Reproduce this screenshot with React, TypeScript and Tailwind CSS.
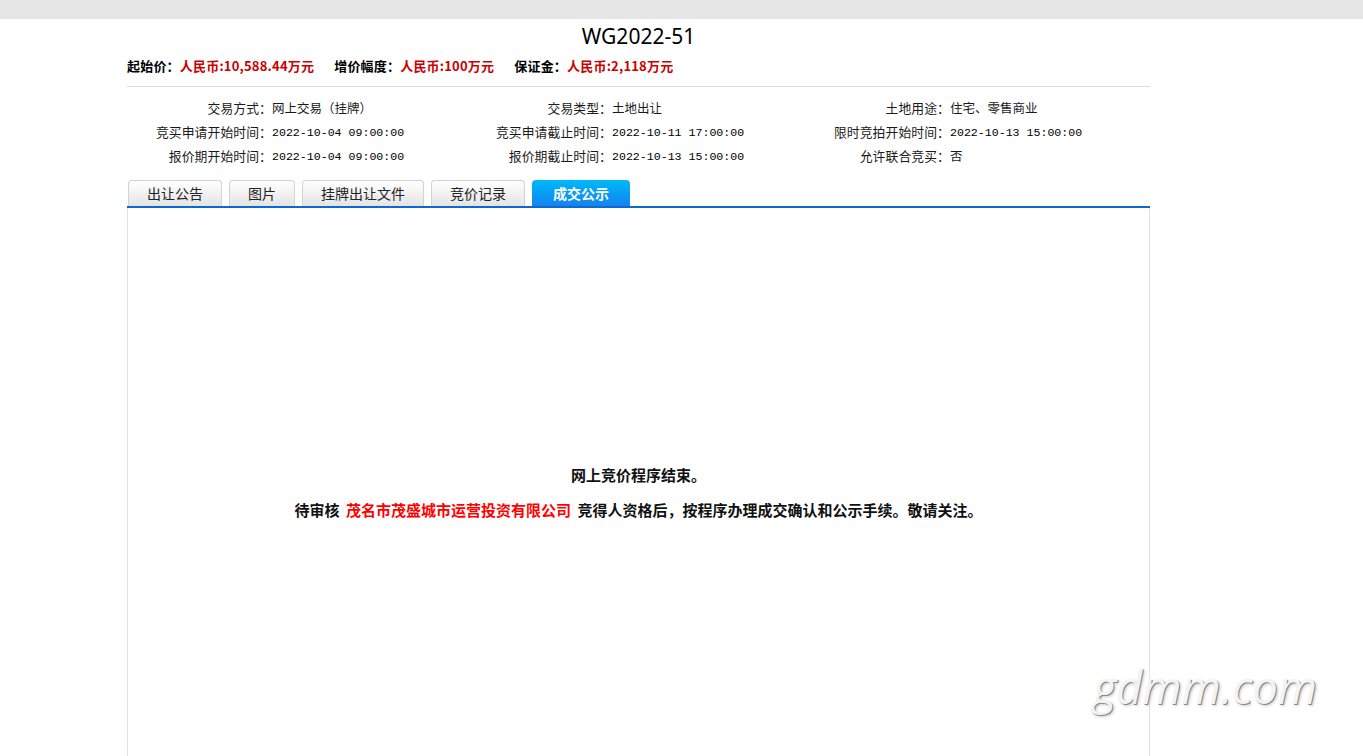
import React from "react";

const cjk = "font-['SimSun','Noto_Sans_CJK_SC',sans-serif]";

const rows: [string, string][][] = [
  [
    ["交易方式：", "网上交易（挂牌）"],
    ["交易类型：", "土地出让"],
    ["土地用途：", "住宅、零售商业"],
  ],
  [
    ["竞买申请开始时间：", "2022-10-04 09:00:00"],
    ["竞买申请截止时间：", "2022-10-11 17:00:00"],
    ["限时竞拍开始时间：", "2022-10-13 15:00:00"],
  ],
  [
    ["报价期开始时间：", "2022-10-04 09:00:00"],
    ["报价期截止时间：", "2022-10-13 15:00:00"],
    ["允许联合竞买：", "否"],
  ],
];

const tabs = [
  { name: "出让公告", w: "w-[94px]" },
  { name: "图片", w: "w-[66px]" },
  { name: "挂牌出让文件", w: "w-[122px]" },
  { name: "竞价记录", w: "w-[94px]" },
];

export default function App() {
  return (
    <div className="relative min-h-[756px] bg-white text-black font-['Noto_Sans_CJK_SC',sans-serif]">
      <div className="h-[19px] bg-[#e6e6e6]" />

      <div className="ml-[127px] w-[1023px]">
        {/* title */}
        <div className="flex h-[34px] items-center justify-center text-[21px] leading-none font-['Noto_Sans','Noto_Sans_CJK_SC',sans-serif]">
          WG2022-51
        </div>

        {/* price line */}
        <div className="flex h-[26px] items-center gap-[20px] text-[13px] font-bold tracking-[0.2px]">
          <span>
            起始价：<span className="text-[#cc0000]">人民币:10,588.44万元</span>
          </span>
          <span>
            增价幅度：<span className="text-[#cc0000]">人民币:100万元</span>
          </span>
          <span>
            保证金：<span className="text-[#cc0000]">人民币:2,118万元</span>
          </span>
        </div>

        <div className="mt-[7px] border-b border-[#dddddd]" />

        {/* info table */}
        <div className={`pt-[9px] text-[12px] text-[#1a1a1a] ${cjk}`}>
          {rows.map((row, i) => (
            <div key={i} className="grid h-6 grid-cols-[340px_338px_1fr] items-center">
              {row.map(([label, value]) => (
                <div key={label} className="flex items-center">
                  <span className="-mr-[3px] w-[145px] shrink-0 text-right text-[12.8px] tracking-[0.1px]">
                    {label}
                  </span>
                  <span className="ml-[3px] text-[12.5px]">
                    {/^\d/.test(value) ? (
                      <span className="font-['Liberation_Mono',monospace] text-[11.6px] text-black">{value}</span>
                    ) : (
                      value
                    )}
                  </span>
                </div>
              ))}
            </div>
          ))}
        </div>

        {/* tabs */}
        <div className="mt-[12px] flex gap-[7px] border-b-2 border-[#0a6acd] pl-px">
          {tabs.map((t) => (
            <div
              key={t.name}
              className={`${t.w} flex h-[26px] items-center justify-center rounded-t-[4px] border border-b-0 border-[#d3d3d3] bg-gradient-to-b from-white to-[#e4e4e4] text-[14px] text-[#222]`}
            >
              {t.name}
            </div>
          ))}
          <div className="flex h-[26px] w-[98px] items-center justify-center rounded-t-[4px] bg-gradient-to-b from-[#00b9f7] to-[#1482f0] text-[14px] font-bold text-white">
            成交公示
          </div>
        </div>

        {/* content */}
        <div className="h-[560px] border-x border-[#e2e2e2] pt-[256px] text-center text-[15px] font-bold text-[#111]">
          <p className="leading-[22px]">网上竞价程序结束。</p>
          <p className="mt-[13px] leading-[22px]">
            待审核 <span className="mx-[3px] text-[#ff0000]">茂名市茂盛城市运营投资有限公司</span> 竞得人资格后，按程序办理成交确认和公示手续。敬请关注。
          </p>
        </div>
      </div>

      {/* watermark */}
      <div className="absolute left-[1093px] top-[664px] text-[45px] italic leading-none text-[#f3f3f3] font-['Open_Sans',sans-serif] [text-shadow:1px_1px_0_#888,2px_2px_3px_#ccc]">
        gdmm.com
      </div>
    </div>
  );
}
